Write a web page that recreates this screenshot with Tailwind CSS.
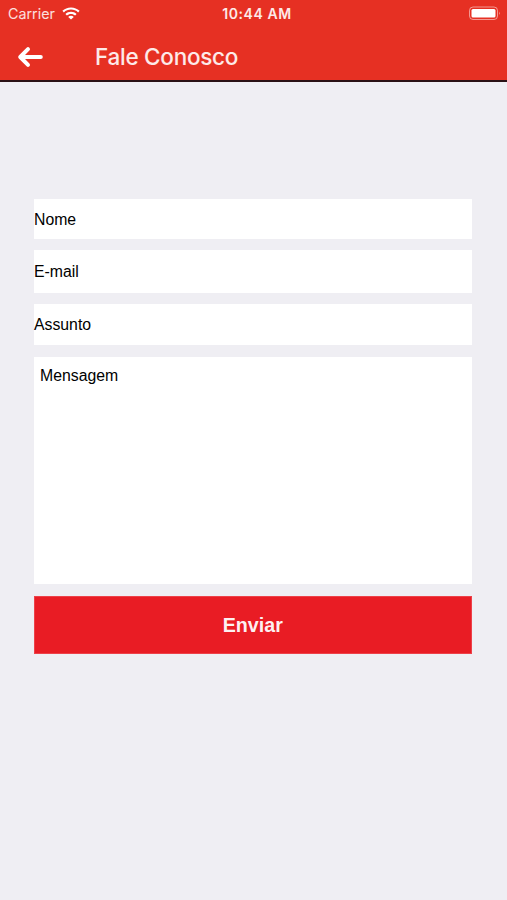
<!DOCTYPE html>
<html lang="pt-BR">
<head>
<meta charset="utf-8">
<meta name="viewport" content="width=device-width, initial-scale=1">
<title>Fale Conosco</title>
<script src="https://cdn.jsdelivr.net/npm/@tailwindcss/browser@4"></script>
</head>
<body class="h-[900px] w-[507px] overflow-hidden bg-[#efeef3] font-['Liberation_Sans',Arial,sans-serif] text-black">
  <header class="h-[82px] border-b-2 border-[#2a1115] bg-[#e63023] text-white">
    <div class="grid h-[27px] grid-cols-3 items-center pr-[6px] pl-2 font-[Inter,sans-serif] text-[14px] leading-[27px]">
      <div class="flex items-center gap-[6px] text-white/85">
        <span class="w-[48px] text-[14.3px] whitespace-nowrap">Carrier</span>
        <svg class="h-[13px] w-[18px]" viewBox="0 0 18 13">
          <path d="M9 .4C5.600.4 2.600 1.700.4 3.800L1.900 5.400C3.800 3.600 6.200 2.600 9 2.600S14.200 3.600 16.100 5.400L17.600 3.800C15.400 1.700 12.400.4 9 .4ZM9 4.700C6.900 4.700 4.900 5.500 3.400 6.900L4.900 8.500C6 7.500 7.400 6.900 9 6.900S12 7.500 13.100 8.500L14.600 6.900C13.100 5.500 11.100 4.700 9 4.700ZM9 8.800C7.900 8.800 7 9.200 6.200 9.900L9 12.600 11.800 9.900C11 9.200 10.100 8.800 9 8.800Z" fill="#fff"/>
        </svg>
      </div>
      <div class="pl-[5px] text-center text-[14px] leading-[27px] font-semibold tracking-[0.6px] whitespace-nowrap text-white/90">10:44 AM</div>
      <svg class="h-[15px] w-[33px] justify-self-end" viewBox="0 0 33 15" fill="none">
        <rect x="1.500" y="1" width="28" height="12.500" rx="3.500" stroke="#fff" stroke-opacity=".5"/>
        <rect x="3.500" y="3" width="24" height="8.500" rx="1.500" fill="#fff"/>
        <path d="M31 5.500Q32.500 7.250 31 9Z" fill="#fff" fill-opacity=".6"/>
      </svg>
    </div>
    <div class="flex h-[53px] items-center pl-[17px]">
      <svg class="mt-[6px] h-[22px] w-[27px]" viewBox="0 0 27 22" fill="none" stroke="#fff" stroke-width="4" stroke-linecap="round" stroke-linejoin="round">
        <path d="M11 3.200 3.200 11 11 18.800M4 11H23.800"/>
      </svg>
      <h1 class="mt-[6px] ml-[51px] font-[Inter,sans-serif] text-[22.500px] leading-[28px] font-medium tracking-[-0.27px] whitespace-nowrap text-white/90">Fale Conosco</h1>
    </div>
  </header>
  <main class="flex flex-col pt-[117px] pr-[35.500px] pl-[34px] text-[15.800px]">
    <div class="flex h-[40px] items-center bg-white pt-px">Nome</div>
    <div class="mt-[11px] flex h-[43px] items-center bg-white">E-mail</div>
    <div class="mt-[11px] flex h-[41px] items-center bg-white">Assunto</div>
    <div class="mt-[12px] h-[227px] bg-white px-[6px] pt-[10px] leading-[18px]">Mensagem</div>
    <button class="mt-[12px] h-[58px] border border-[#ed4149] bg-[#e91c24] pt-[2px] text-[19.700px] font-bold text-white/95">Enviar</button>
  </main>
</body>
</html>
